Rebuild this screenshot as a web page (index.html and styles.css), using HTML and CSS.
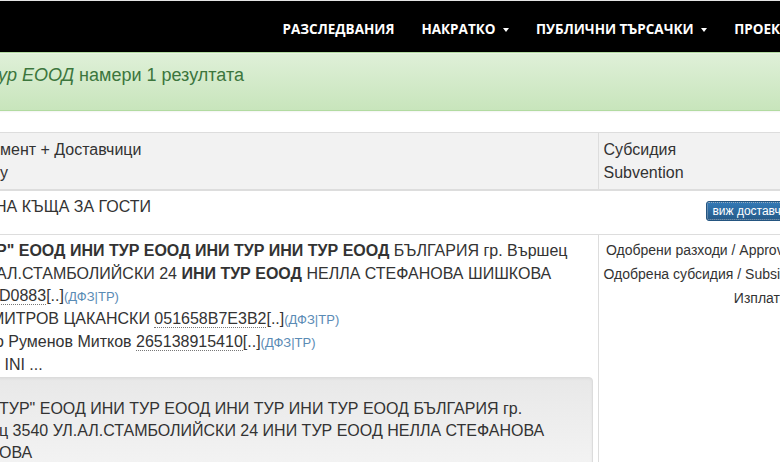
FILE: index.html
```html
<!DOCTYPE html>
<html lang="bg">

<head>
    <meta charset="UTF-8">
    <meta name="viewport" content="width=device-width, initial-scale=1.0">
    <title>Търсене - Ини Тур ЕООД</title>
    <link rel="stylesheet" href="styles.css">
</head>

<body>

    <nav class="navbar">
        <ul class="navbar-nav">
            <li><a href="#">Разследвания</a></li>
            <li><a href="#">Накратко <span class="caret"></span></a></li>
            <li><a href="#">Публични търсачки <span class="caret"></span></a></li>
            <li><a href="#">Проекти</a></li>
        </ul>
    </nav>

    <div class="content">
        <div class="alert-success"><em>ур ЕООД</em> намери 1 резултата</div>

        <table class="results">
            <colgroup>
                <col class="col-main">
                <col class="col-sub">
            </colgroup>
            <thead>
                <tr>
                    <th class="main-head">
                        <div class="line">мент + Доставчици</div>
                        <div class="line">y</div>
                    </th>
                    <th class="sub-head">
                        <div class="line">Субсидия</div>
                        <div class="line">Subvention</div>
                    </th>
                </tr>
            </thead>
            <tbody>
                <tr>
                    <td colspan="2" class="project-cell">
                        <div class="project-row">
                            <span class="line">НА КЪЩА ЗА ГОСТИ</span>
                            <button type="button" class="btn-suppliers">виж доставчици</button>
                        </div>
                    </td>
                </tr>
                <tr>
                    <td class="main-cell">
                        <div class="line cut"><b>Р" ЕООД ИНИ ТУР ЕООД ИНИ ТУР ИНИ ТУР ЕООД</b> БЪЛГАРИЯ гр. Вършец</div>
                        <div class="line cut">АЛ.СТАМБОЛИЙСКИ 24 <b>ИНИ ТУР ЕООД</b> НЕЛЛА СТЕФАНОВА ШИШКОВА</div>
                        <div class="line cut-d"><abbr>D0883</abbr>[..]<span class="refs">(<a href="#">ДФЗ</a>|<a href="#">ТР</a>)</span></div>
                        <div class="line cut-m">МИТРОВ ЦАКАНСКИ <abbr>051658B7E3B2</abbr>[..]<span class="refs">(<a href="#">ДФЗ</a>|<a href="#">ТР</a>)</span></div>
                        <div class="line cut-o">о Руменов Митков <abbr>265138915410</abbr>[..]<span class="refs">(<a href="#">ДФЗ</a>|<a href="#">ТР</a>)</span></div>
                        <div class="line">&nbsp;INI ...</div>
                        <div class="well">
                            <div class="line">ТУР" ЕООД ИНИ ТУР ЕООД ИНИ ТУР ИНИ ТУР ЕООД БЪЛГАРИЯ гр.</div>
                            <div class="line">ц 3540 УЛ.АЛ.СТАМБОЛИЙСКИ 24 ИНИ ТУР ЕООД НЕЛЛА СТЕФАНОВА</div>
                            <div class="line">ОВА</div>
                        </div>
                    </td>
                    <td class="sub-cell">
                        <div class="amounts">
                            <div>Одобрени разходи / Approved:&nbsp;</div>
                            <div>Одобрена субсидия / Subsidy :&nbsp;&nbsp;</div>
                            <div>Изплатено:</div>
                        </div>
                    </td>
                </tr>
            </tbody>
        </table>
    </div>

</body>

</html>
```

FILE: styles.css
```css
html,
body {
    margin: 0;
    padding: 0;
    overflow: hidden;
}

body {
    font-family: "Liberation Sans", Arial, sans-serif;
    font-size: 16px;
    line-height: 1.42857;
    color: #333;
    background-color: #fff;
}

.navbar {
    background-color: #000;
    border-top: 1px solid #e4e4e4;
    height: 51px;
}

.navbar-nav {
    list-style: none;
    display: flex;
    margin: 0 0 0 269px;
    padding: 0;
    white-space: nowrap;
}

.navbar-nav a {
    display: block;
    padding: 18px 13.5px 13px;
    font-family: "Open Sans", sans-serif;
    font-weight: 700;
    font-size: 13.5px;
    line-height: 20px;
    text-transform: uppercase;
    color: #fff;
    text-decoration: none;
}

.caret {
    display: inline-block;
    width: 0;
    height: 0;
    margin-left: 4px;
    vertical-align: middle;
    border-top: 4px solid #fff;
    border-left: 3px solid transparent;
    border-right: 3px solid transparent;
}

.alert-success {
    margin: 0 -30px 21px -10px;
    padding: 9px 15px 22px 7px;
    font-size: 18px;
    line-height: 26px;
    color: #3c763d;
    background-image: linear-gradient(to bottom, #dff0d8 0, #c8e5bc 100%);
    border: 1px solid #b2dba1;
    border-radius: 4px;
    box-shadow: inset 0 1px 0 rgba(255, 255, 255, .25), 0 1px 2px rgba(0, 0, 0, .05);
    white-space: nowrap;
}

.results {
    width: 812px;
    table-layout: fixed;
    border-collapse: collapse;
    border-top: 1px solid #ddd;
}

.col-main {
    width: 598px;
}

.col-sub {
    width: 214px;
}

.results th,
.results td {
    padding: 5px;
    vertical-align: top;
    text-align: left;
    font-weight: normal;
    border-top: 1px solid #ddd;
}

.results thead th {
    padding-top: 6px;
    padding-bottom: 4px;
    background-color: #f2f2f2;
    border-bottom: 2px solid #ddd;
}

.results .main-head,
.results .main-cell,
.results .project-cell {
    padding-left: 0;
}

.results .sub-head,
.results .sub-cell {
    border-left: 1px solid #ddd;
}

.results .sub-cell {
    padding-top: 3px;
}

.line {
    white-space: nowrap;
}

.cut {
    margin-left: -4px;
}

.cut-d {
    margin-left: -1px;
}

.cut-m {
    margin-left: -9px;
}

.cut-o {
    margin-left: -5px;
}

.project-row {
    display: flex;
    justify-content: space-between;
    align-items: flex-start;
    min-height: 33px;
    margin-left: -5px;
}

.btn-suppliers {
    margin-top: 5px;
    padding: 1px 5px;
    font-family: "Liberation Sans", Arial, sans-serif;
    font-size: 12px;
    line-height: 16px;
    color: #fff;
    background-image: linear-gradient(to bottom, #337ab7 0, #265a88 100%);
    border: 1px solid #245580;
    border-radius: 3px;
    outline: 1px dotted #9ab;
    outline-offset: -2px;
    white-space: nowrap;
}

abbr {
    text-decoration: none;
    border-bottom: 1px dotted #777;
}

.refs {
    font-size: 13px;
    color: #5a8bb5;
}

.refs a {
    color: #5a8bb5;
    text-decoration: none;
}

.well {
    margin: 0 0 0 -20px;
    padding: 20px 19px 19px 18px;
    font-size: 16px;
    line-height: 22px;
    background-image: linear-gradient(to bottom, #e8e8e8 0, #f5f5f5 100%);
    border: 1px solid #dcdcdc;
    border-radius: 4px;
    box-shadow: inset 0 1px 3px rgba(0, 0, 0, .05), 0 1px 0 rgba(255, 255, 255, .1);
}

.amounts {
    font-size: 14px;
    line-height: 24px;
    text-align: right;
    white-space: nowrap;
}
```
